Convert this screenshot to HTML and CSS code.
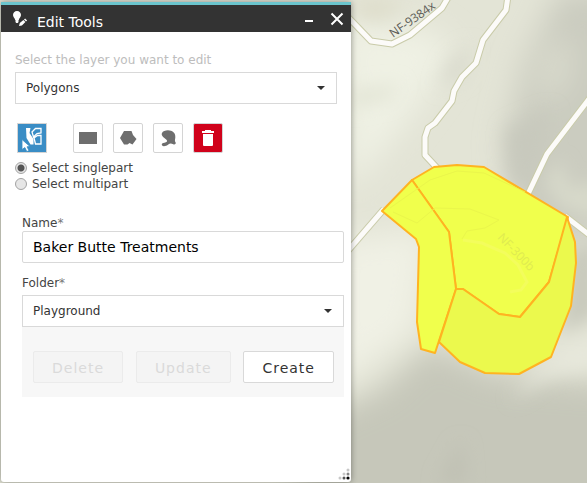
FILE: index.html
```html
<!DOCTYPE html>
<html lang="en">
<head>
<meta charset="utf-8">
<meta name="viewport" content="width=device-width, initial-scale=1">
<title>Edit Tools</title>
<link rel="stylesheet" href="styles.css">
</head>
<body>
<svg class="map" viewBox="0 0 587 483" preserveAspectRatio="xMinYMin slice" aria-label="Map">
  <defs>
    <filter id="relief" x="-40%" y="-40%" width="180%" height="180%"><feGaussianBlur stdDeviation="15"/></filter>
    <filter id="ridge" x="-40%" y="-40%" width="180%" height="180%"><feGaussianBlur stdDeviation="9"/></filter>
  </defs>
  <rect width="587" height="483" fill="#e3e4d6"/>
  <g filter="url(#relief)">
    <path d="M340 20L430 30L455 50L430 90L400 130L350 190Z" fill="#eff1e4"/>
    <path d="M560 -10L620 -10V240H515L505 140L525 60Z" fill="#cbccc0"/>
    <path d="M550 50L572 40L560 90L540 100Z" fill="#e0e1d3"/>
    <path d="M330 240L430 230L415 330L330 390Z" fill="#f0f1e5"/>
    <path d="M300 425L380 390L430 345L500 375L640 385V540H300Z" fill="#c6c7ba"/>
    <path d="M0 0H6V483H0Z" fill="#c6c7b9"/>
  </g>
  <g filter="url(#ridge)">
    <path d="M352 0H405L385 20L360 18Z" fill="#deddca"/>
    <path d="M450 60L472 44L464 78L438 88Z" fill="#d9dacd"/>
    <path d="M506 130L552 110L536 192L510 178Z" fill="#c8c9bd"/>
    <path d="M348 90L400 84L390 100L350 108Z" fill="#e3e5d6"/>
    <path d="M568 250L600 240V315L560 335Z" fill="#c9cabd"/>
    <path d="M540 368L570 345L600 340V366L550 374L510 402Z" fill="#e7e8dc"/>
    <path d="M438 483L462 440L466 483Z" fill="#bfc0b3"/>
    <path d="M545 180L560 160L570 190L600 180V220L560 205Z" fill="#d8dacb"/>
  </g>
  <g fill="none" stroke-linejoin="round">
    <g stroke="#c9cba9" stroke-width="7">
      <path d="M346 15L371 41L392 44L410 35L442 8L449 -4"/>
      <path d="M508 -4L506 10L483 40L476 63L462 77L454 91L452 101L435 123L428 128L425 137V155L438 169"/>
      <path d="M592 95L547 154L528 194"/>
      <path d="M340 260L384 209"/>
      <path d="M565 216L592 237"/>
    </g>
    <g stroke="#fcfbf9" stroke-width="5">
      <path d="M346 15L371 41L392 44L410 35L442 8L449 -4"/>
      <path d="M508 -4L506 10L483 40L476 63L462 77L454 91L452 101L435 123L428 128L425 137V155L438 169"/>
      <path d="M592 95L547 154L528 194"/>
      <path d="M340 260L384 209"/>
      <path d="M565 216L592 237"/>
    </g>
  </g>
  <text class="road-name" transform="translate(393 38) rotate(-35)">NF-9384x</text>
  <g stroke="#ffb321" stroke-width="2" stroke-linejoin="round">
    <path fill="#f0ff4c" d="M412 180L434 167L457 165L484 167L568 217L549 282L520 317L499 314L463 289H456L449 232Z"/>
    <path fill="#f0ff4c" d="M382 211L412 180L449 232L456 289L435 353L421 349L417 322L419 247L416 239Z"/>
    <path fill="#ebf94d" d="M456 289H463L499 314L520 317L549 282L567 217L575 242L576 263L571 306L551 357L519 374L485 373L460 362L439 342Z"/>
  </g>
  <g fill="none" stroke="#eaf64b" stroke-width="1">
    <path d="M390 208L430 180L457 171L484 173L525 192M393 212L417 223L435 208L470 209L499 220L485 228L467 231L462 239"/>
    <path stroke="#f3fd5c" stroke-width="3" d="M463 240L482 243L505 253L518 265L527 282L521 290L510 292"/>
  </g>
  <text class="road-name faint" transform="translate(497 238) rotate(46)">NF-300b</text>
</svg>

<main class="panel">
  <header class="titlebar">
    <svg class="title-icon" viewBox="0 0 16 18" aria-hidden="true">
      <path fill="#fff" d="M5 1C2.600 1 1 2.700 1 5c0 2 1.700 2.800 2.200 5h3.600C7.300 7.800 9 7 9 5c0-2.300-1.600-4-4-4ZM3.500 10h3v2L5.800 13H4.200l-.7-1Z"/>
      <path fill="#fff" d="M7 16l.8-3 3.600-3 2 2-3.500 3.500ZM12 9.400l1.100-.9 2 2-1.100 1Z"/>
    </svg>
    <h1>Edit Tools</h1>
    <button type="button" class="window-button" aria-label="Minimize"><svg viewBox="0 0 14 14"><path d="M3 9H11" stroke="#fff" stroke-width="2"/></svg></button>
    <button type="button" class="window-button" aria-label="Close"><svg viewBox="0 0 14 14"><path d="M1.500 1.500L12.500 12.500M12.500 1.500L1.500 12.500" stroke="#fff" stroke-width="2"/></svg></button>
  </header>

  <form class="editor">
    <label class="hint" for="layer">Select the layer you want to edit</label>
    <div class="dropdown">
      <select id="layer"><option>Polygons</option></select>
      <svg class="caret" viewBox="0 0 8 4" aria-hidden="true"><path d="M0 0H8L4 4Z" fill="#323232"/></svg>
    </div>

    <div class="tools">
      <button type="button" class="tool select-tool" aria-label="Select features">
        <svg viewBox="0 0 28 28">
          <path fill="#fff" d="M8 4h4.500L11.500 9l4 6v5.500h-3L8.500 14Z"/>
          <path fill="none" stroke="#fff" stroke-width="1.300" d="M14 8l3.500-3.500H23v4.500l-4 .5-3.500 3.500ZM16 14l3.500-2.500H23V20h-5.500Z"/>
          <path fill="#fff" stroke="#3a8dc5" stroke-width=".8" d="M4 15.500l8 7-3 .3 2 3.800-2.200 1-1.900-4L4 25.500Z"/>
        </svg>
      </button>
      <button type="button" class="tool" aria-label="Rectangle"><svg viewBox="0 0 28 28"><path fill="#6e6e6e" d="M5 8h18v12H5Z"/></svg></button>
      <button type="button" class="tool" aria-label="Polygon"><svg viewBox="0 0 28 28"><path fill="#6e6e6e" d="M6 14l4-7h7.500l1.500 4 3.500 4-4 5.500-3-1.500-2 1.500H10Z"/></svg></button>
      <button type="button" class="tool" aria-label="Freehand polygon"><svg viewBox="0 0 28 28"><path fill="#6e6e6e" d="M8 9c1-2.500 6-3.500 9-2.200 3.500 1.200 4.600 4 4.300 7-.2 2-.8 3 .2 4.500 1 1.500-.8 2.700-2.200 2-2-1-3.500-1-5 .2-2 1.600-5.300 2.300-6.300.8-.8-1.500.5-2.200 2.500-2.500 2-.4 3.300-1.300 2.200-2.700-1.700-2.100-6.200-4.100-4.700-7.100Z"/></svg></button>
      <button type="button" class="tool delete-tool" aria-label="Delete feature"><svg viewBox="0 0 28 28"><path fill="#fff" d="M8 7h3V6h6v1h3v2H8ZM9 10h10v11q0 1-1 1h-8q-1 0-1-1Z"/></svg></button>
    </div>

    <div class="modes">
      <label><input type="radio" name="mode" checked><span>Select singlepart</span></label>
      <label><input type="radio" name="mode"><span>Select multipart</span></label>
    </div>

    <div class="fields">
      <label for="name">Name<span class="required">*</span></label>
      <input id="name" class="name-input" type="text" value="Baker Butte Treatments">
      <label for="folder" class="folder-label">Folder<span class="required">*</span></label>
      <div class="dropdown">
        <select id="folder"><option>Playground</option></select>
        <svg class="caret" viewBox="0 0 8 4" aria-hidden="true"><path d="M0 0H8L4 4Z" fill="#323232"/></svg>
      </div>
      <div class="actions">
        <button type="button" disabled>Delete</button>
        <button type="button" disabled>Update</button>
        <button type="button">Create</button>
      </div>
    </div>
  </form>
  <svg class="grip" viewBox="0 0 12 12" aria-hidden="true">
    <g fill="#c7c7c7"><circle cx="10" cy="2" r="1.500"/><circle cx="6" cy="6" r="1.500"/><circle cx="2" cy="10" r="1.500"/></g>
    <circle cx="10" cy="6" r="1.500" fill="#858585"/>
    <circle cx="6" cy="10" r="1.500" fill="#555"/><circle cx="10" cy="10" r="1.600"/>
  </svg>
</main>
</body>
</html>
```
FILE: styles.css
```css
* { box-sizing: border-box; }
body {
  margin: 0;
  min-height: 100vh;
  padding: 2px 1px 1px;
  display: flex;
  overflow: hidden;
  font: 12px/16px "DejaVu Sans", Verdana, sans-serif;
  color: #444;
}
button, input, select { font: inherit; margin: 0; }
svg { display: block; }
.map { position: absolute; inset: 0; width: 100%; height: 100%; }
.road-name { font: 12px "Open Sans", sans-serif; fill: #5a5a55; }
.faint { fill: #dfeb50; }
.panel {
  position: relative;
  display: flex;
  flex-direction: column;
  width: 100%;
  max-width: 350px;
  background: #fff;
  border-radius: 0 0 3px 3px;
  box-shadow: 0 0 6px #00000066;
}
.titlebar {
  display: flex;
  align-items: center;
  height: 30px;
  padding: 0 7px 0 11px;
  border-top: 3px solid #6bc5cd;
  background: #333;
  color: #fff;
}
.title-icon { width: 16px; height: 18px; }
h1 { flex: 1; margin: 6px 0 0 9px; font-size: 14px; line-height: 20px; font-weight: 400; }
.window-button { width: 14px; height: 14px; padding: 0; border: 0; background: none; }
.window-button + .window-button { margin-left: 14px; }
.editor { flex: 1; padding: 20px 14px; }
.hint { display: block; margin-bottom: 4px; color: #bdbdbd; }
.dropdown { display: grid; align-items: center; }
.dropdown > * { grid-area: 1 / 1; }
select {
  width: 100%;
  height: 32px;
  padding: 0 10px;
  border: 1px solid #d9d9d9;
  border-radius: 0;
  background: #fff;
  color: #333;
  appearance: none;
}
.caret { justify-self: end; width: 8px; height: 4px; margin-right: 12px; pointer-events: none; }
.tools { display: flex; gap: 10px; margin: 19px 2px 7px; }
.tool { width: 30px; height: 30px; padding: 0; border: 1px solid #d4d4d4; border-radius: 2px; background: #fff; }
.select-tool { margin-right: 16px; background: #3a8dc5; border-radius: 0; }
.delete-tool { background: #d0021b; }
.modes label { display: flex; align-items: center; gap: 5px; }
.modes input {
  width: 12px;
  height: 12px;
  border: 1px solid #a3a3a3;
  border-radius: 50%;
  background: #e6e6e6;
  appearance: none;
}
.modes input:checked { background: radial-gradient(circle, #555 0 3px, #e6e6e6 4px); }
.fields { margin: 23px -7px 0 7px; }
.fields > label { display: block; }
.required { color: #777; }
.name-input {
  display: block;
  width: 100%;
  height: 32px;
  padding: 0 10px;
  border: 1px solid #d9d9d9;
  border-radius: 2px;
  background: #fff;
  color: #000;
  font-size: 14px;
}
.fields .folder-label { margin: 12px 0 4px; }
.actions { display: flex; justify-content: space-between; padding: 24px 10px 14px 11px; background: #f7f7f7; }
.actions button {
  height: 32px;
  padding: 2px 18px 0;
  border: 1px solid #d9d9d9;
  border-radius: 2px;
  background: #fff;
  color: #333;
  font-size: 14px;
  letter-spacing: 1px;
}
.actions button:disabled { background: #f4f4f4; border-color: #ebebeb; color: #dadada; }
.grip { position: absolute; right: 1px; bottom: 2px; width: 12px; height: 12px; }
```
